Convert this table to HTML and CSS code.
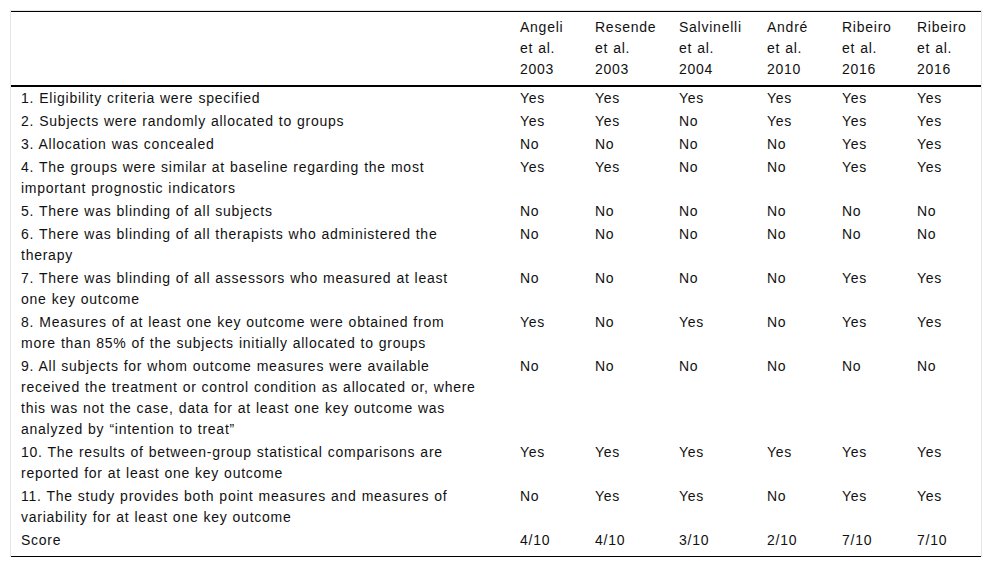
FILE: index.html
```html
<!DOCTYPE html>
<html>
<head>
<meta charset="utf-8">
<link rel="stylesheet" href="styles.css">
</head>
<body>
<div class="frame">
<table class="pedro">
<colgroup>
<col class="c-crit">
<col class="c-75">
<col class="c-84">
<col class="c-88">
<col class="c-75">
<col class="c-75">
<col class="c-last">
</colgroup>
<thead>
<tr>
<th></th>
<th>Angeli<br>et al.<br>2003</th>
<th>Resende<br>et al.<br>2003</th>
<th>Salvinelli<br>et al.<br>2004</th>
<th>André<br>et al.<br>2010</th>
<th>Ribeiro<br>et al.<br>2016</th>
<th>Ribeiro<br>et al.<br>2016</th>
</tr>
</thead>
<tbody>
<tr><td>1. Eligibility criteria were specified</td><td>Yes</td><td>Yes</td><td>Yes</td><td>Yes</td><td>Yes</td><td>Yes</td></tr>
<tr><td>2. Subjects were randomly allocated to groups</td><td>Yes</td><td>Yes</td><td>No</td><td>Yes</td><td>Yes</td><td>Yes</td></tr>
<tr><td>3. Allocation was concealed</td><td>No</td><td>No</td><td>No</td><td>No</td><td>Yes</td><td>Yes</td></tr>
<tr><td>4. The groups were similar at baseline regarding the most important prognostic indicators</td><td>Yes</td><td>Yes</td><td>No</td><td>No</td><td>Yes</td><td>Yes</td></tr>
<tr><td>5. There was blinding of all subjects</td><td>No</td><td>No</td><td>No</td><td>No</td><td>No</td><td>No</td></tr>
<tr><td>6. There was blinding of all therapists who administered the therapy</td><td>No</td><td>No</td><td>No</td><td>No</td><td>No</td><td>No</td></tr>
<tr><td>7. There was blinding of all assessors who measured at least one key outcome</td><td>No</td><td>No</td><td>No</td><td>No</td><td>Yes</td><td>Yes</td></tr>
<tr><td>8. Measures of at least one key outcome were obtained from more than 85% of the subjects initially allocated to groups</td><td>Yes</td><td>No</td><td>Yes</td><td>No</td><td>Yes</td><td>Yes</td></tr>
<tr><td>9. All subjects for whom outcome measures were available received the treatment or control condition as allocated or, where this was not the case, data for at least one key outcome was analyzed by “intention to treat”</td><td>No</td><td>No</td><td>No</td><td>No</td><td>No</td><td>No</td></tr>
<tr><td>10. The results of between-group statistical comparisons are reported for at least one key outcome</td><td>Yes</td><td>Yes</td><td>Yes</td><td>Yes</td><td>Yes</td><td>Yes</td></tr>
<tr><td>11. The study provides both point measures and measures of variability for at least one key outcome</td><td>No</td><td>Yes</td><td>Yes</td><td>No</td><td>Yes</td><td>Yes</td></tr>
<tr class="last"><td>Score</td><td>4/10</td><td>4/10</td><td>3/10</td><td>2/10</td><td>7/10</td><td>7/10</td></tr>
</tbody>
</table>
</div>
</body>
</html>
```

FILE: styles.css
```css
html, body {
  margin: 0;
  padding: 0;
  background: #ffffff;
}
body {
  padding: 10px;
  font-family: "Liberation Sans", Arial, sans-serif;
  font-size: 14px;
  color: #111111;
}
.frame {
  width: 970px;
  border: 1px solid #e6e6e6;
  border-bottom: none;
}
.pedro {
  width: 970px;
  border-collapse: collapse;
  table-layout: fixed;
  border-top: 1px solid #000;
  border-bottom: 1px solid #000;
  letter-spacing: 0.75px;
  word-spacing: 0.4px;
}
.c-crit { width: 499px; }
.c-75 { width: 75px; }
.c-84 { width: 84px; }
.c-88 { width: 88px; }
.c-last { width: 74px; }
.pedro th {
  font-weight: normal;
  text-align: left;
  vertical-align: top;
  line-height: 21px;
  padding: 5px 4px 5px 10px;
  border-bottom: 2px solid #000;
}
.pedro td {
  text-align: left;
  vertical-align: top;
  line-height: 21px;
  padding: 1px 4px 1px 10px;
}
.pedro td:first-child {
  padding-right: 33px;
}
.pedro tr.last td {
  padding-bottom: 5px;
}
```
